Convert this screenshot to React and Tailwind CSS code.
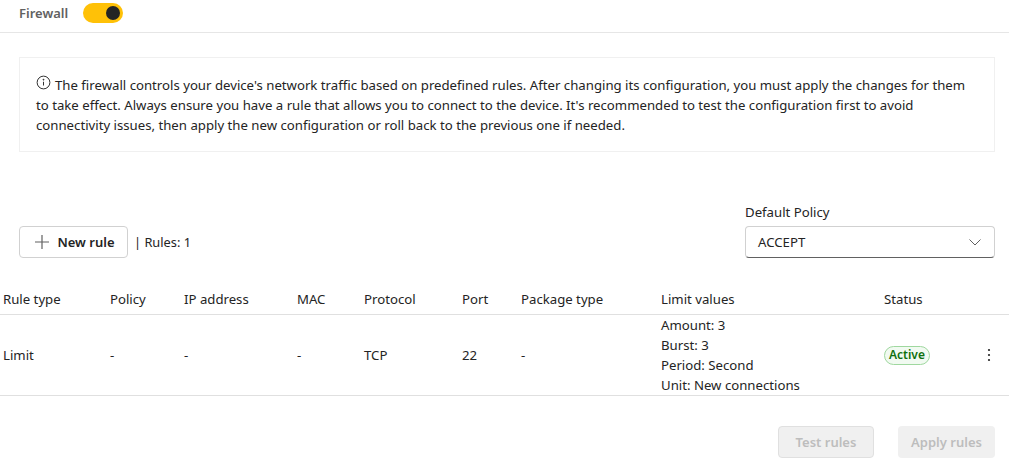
import React from "react";

const cols = "grid grid-cols-[107px_74px_113px_67px_98px_59px_140px_223px_1fr] pl-[3px]";
const headers = ["Rule type","Policy","IP address","MAC","Protocol","Port","Package type","Limit values","Status"];

export default function App() {
  return (
    <div className="w-[1009px] h-[476px] overflow-hidden bg-white font-['Noto_Sans',sans-serif] text-[13.2px] leading-5 text-[#242424]">
      <header className="h-[33px] flex items-center pl-[19px] pb-[6px] gap-[15px] border-b border-[#e6e6e6]">
        <span className="font-semibold text-[13px] text-[#616161]">Firewall</span>
        <span className="w-10 h-5 rounded-full bg-[#ffc107] flex items-center justify-end pr-[3px]">
          <span className="w-[14px] h-[14px] rounded-full bg-[#242424]" />
        </span>
      </header>

      <section className="ml-[19px] mr-[14px] mt-6 h-[95px] border border-[#f0f0f0] px-4 pt-[17px]">
        <p className="w-[935px]">
          <svg className="inline-block align-[0px] mr-[4px]" width="15" height="15" viewBox="0 0 16 16" fill="none" stroke="#242424" strokeWidth="1">
            <circle cx="8" cy="8" r="6.8" />
            <path d="M8 7.2v4" />
            <circle cx="8" cy="5" r="0.5" fill="#242424" />
          </svg>
          The firewall controls your device's network traffic based on predefined rules. After changing its configuration, you must apply the changes for them to take effect. Always ensure you have a rule that allows you to connect to the device. It's recommended to test the configuration first to avoid connectivity issues, then apply the new configuration or roll back to the previous one if needed.
        </p>
      </section>

      <section className="mt-[50px] mr-[14px] ml-[19px] flex items-end justify-between">
        <div className="flex items-center gap-[6px]">
          <button className="w-[109px] h-8 rounded border border-[#d1d1d1] bg-white flex items-center justify-center gap-[7px] pl-[2px] font-semibold text-[13px]">
            <svg width="16" height="16" viewBox="0 0 16 16" fill="none" stroke="#616161" strokeWidth="1.2">
              <path d="M8 1v14M1 8h14" />
            </svg>
            New rule
          </button>
          <span className="text-[12.8px]">| Rules: 1</span>
        </div>
        <div className="w-[250px]">
          <label className="block mb-1">Default Policy</label>
          <div className="h-8 rounded border border-[#d1d1d1] border-b-[#616161] flex items-center justify-between px-3">
            <span>ACCEPT</span>
            <svg width="14" height="14" viewBox="0 0 14 14" fill="none" stroke="#616161" strokeWidth="1">
              <path d="M1.5 4.5 7 10l5.5-5.5" />
            </svg>
          </div>
        </div>
      </section>

      <section className="mt-[31px]">
        <div className={`${cols} h-[26px] border-b border-[#e0e0e0]`}>
          {headers.map((h) => <div key={h}>{h}</div>)}
        </div>
        <div className={`${cols} h-[81px] items-center border-b border-[#e0e0e0]`}>
          <div>Limit</div>
          <div>-</div>
          <div>-</div>
          <div>-</div>
          <div>TCP</div>
          <div>22</div>
          <div>-</div>
          <div>
            <div>Amount: 3</div>
            <div>Burst: 3</div>
            <div>Period: Second</div>
            <div>Unit: New connections</div>
          </div>
          <div className="flex items-center justify-between pr-[12px]">
            <span className="w-[46px] h-[19px] rounded-full border border-[#9fd89f] bg-[#f1faf1] text-[#0e700e] text-[12px] font-semibold flex items-center justify-center">Active</span>
            <svg width="16" height="16" viewBox="0 0 16 16" fill="#242424">
              <circle cx="8" cy="3" r="1.1" />
              <circle cx="8" cy="8" r="1.1" />
              <circle cx="8" cy="13" r="1.1" />
            </svg>
          </div>
        </div>
      </section>

      <footer className="mt-[30px] pr-[14px] flex justify-end gap-6">
        <button className="w-[96px] h-8 rounded border border-[#e0e0e0] bg-[#f0f0f0] text-[#bdbdbd] font-semibold text-[13px]">Test rules</button>
        <button className="w-[97px] h-8 rounded bg-[#f0f0f0] text-[#bdbdbd] font-semibold text-[13px]">Apply rules</button>
      </footer>
    </div>
  );
}
